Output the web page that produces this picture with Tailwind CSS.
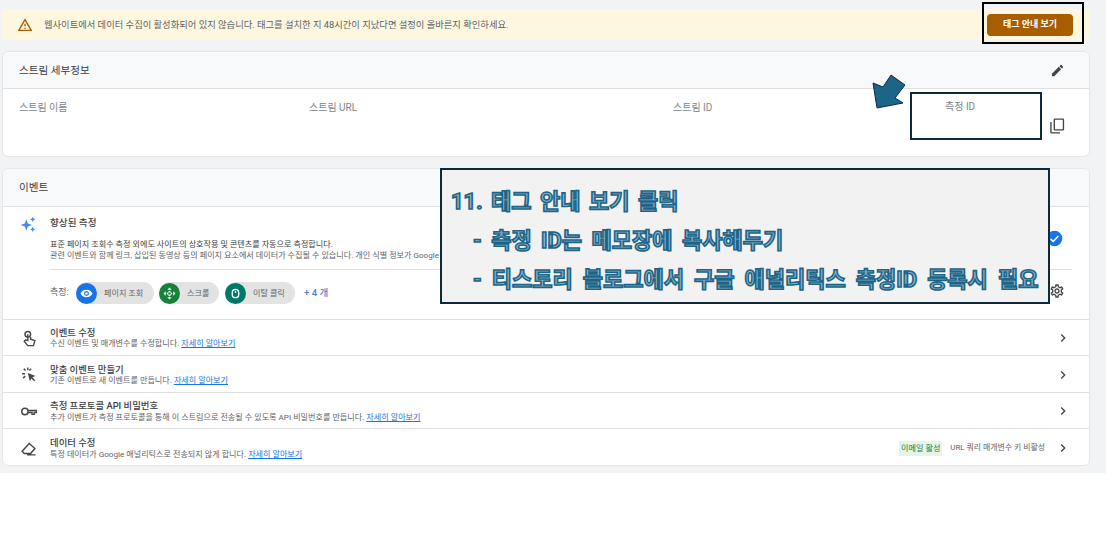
<!DOCTYPE html>
<html lang="ko">
  <head>
    <meta charset="UTF-8" />
    <title>스트림 세부정보</title>
    <script src="https://cdn.jsdelivr.net/npm/@tailwindcss/browser@4"></script>
  </head>
  <body class="bg-white font-['Roboto','Noto_Sans_CJK_KR',sans-serif]">
    <div class="relative w-[1106px] h-[545px] overflow-hidden">
      <div class="h-[473px] bg-[#f1f3f4] pt-[9px] pl-[2px] pr-[16px]">
        <!-- banner -->
        <div class="h-[31px] bg-[#fef7e0] rounded-sm flex items-center pl-[15px] pr-[17px]">
          <svg class="w-[16px] h-[16px] fill-[#a85d00]" viewBox="0 0 24 24"><path d="M12 5.990L19.530 19H4.470L12 5.990M12 2L1 21h22L12 2zm1 14h-2v2h2v-2zm0-6h-2v4h2v-4z"/></svg>
          <p class="ml-[11px] text-[9.300px] text-[#5f6368]">웹사이트에서 데이터 수집이 활성화되어 있지 않습니다. 태그를 설치한 지 48시간이 지났다면 설정이 올바른지 확인하세요.</p>
          <button class="ml-auto w-[86px] h-[22px] bg-[#a85d00] rounded-sm text-white text-[9px] font-bold">태그 안내 보기</button>
        </div>

        <!-- stream details -->
        <section class="mt-[11px] h-[106px] bg-white rounded-md border border-[#e4e6e8]">
          <div class="h-[37px] pt-[1px] bg-[#f8f9fa] border-b border-[#e0e0e0] rounded-t-md flex items-center justify-between pl-[16px] pr-[24px]">
            <h2 class="text-[10.600px] text-[#3c4043]">스트림 세부정보</h2>
            <svg class="w-[15px] h-[15px] fill-[#444746]" viewBox="0 0 24 24"><path d="M3 17.250V21h3.750L17.810 9.940l-3.750-3.750L3 17.250zM20.710 7.040c.39-.39.39-1.020 0-1.410l-2.340-2.340c-.39-.39-1.020-.39-1.410 0l-1.830 1.830 3.750 3.750 1.830-1.830z"/></svg>
          </div>
          <div class="relative flex pt-[11px] pl-[16px] text-[10px] text-[#80868b]">
            <span class="w-[290px]">스트림 이름</span>
            <span class="w-[364px]">스트림 URL</span>
            <span>스트림 ID</span>
            <svg class="absolute left-[1045px] top-[28px] w-[18px] h-[18px] fill-[#444746]" viewBox="0 0 24 24"><path d="M9 2h11a1.500 1.500 0 0 1 1.500 1.500v13A1.500 1.500 0 0 1 20 18H9a1.500 1.500 0 0 1-1.500-1.500v-13A1.500 1.500 0 0 1 9 2zm.3 1.800v12.400h10.400V3.800zM3 6.500h1.800v13.700H16V22H4.500A1.500 1.500 0 0 1 3 20.500z"/></svg>
          </div>
        </section>

        <!-- events -->
        <section class="mt-[11px] h-[298px] bg-white rounded-md border border-[#e4e6e8]">
          <div class="h-[38px] pt-[1px] bg-[#f8f9fa] border-b border-[#e0e0e0] rounded-t-md flex items-center pl-[16px]">
            <h2 class="text-[10.600px] text-[#3c4043]">이벤트</h2>
          </div>

          <div class="relative h-[113px] border-b border-[#e0e0e0] flex pl-[17px] pr-[17px]">
            <svg class="mt-[9px] w-[16px] h-[16px] fill-[#4285f4]" viewBox="0 0 24 24"><path d="M9.500 5l2.200 6.300 6.300 2.200-6.300 2.200L9.500 22l-2.200-6.300L1 13.500l6.300-2.200zM19 1l1.200 2.800L23 5l-2.800 1.200L19 9l-1.200-2.800L15 5l2.800-1.200zM19 16l1.200 2.800 2.800 1.200-2.800 1.200L19 24l-1.200-2.800L15 20l2.800-1.200z"/></svg>
            <div class="ml-[14px] flex-1">
              <h3 class="mt-[9px] text-[9.600px] leading-[14px] font-medium text-[#3c4043]">향상된 측정</h3>
              <p class="mt-[9px] text-[8.100px] leading-[11px] text-[#3c4043] whitespace-nowrap">표준 페이지 조회수 측정 외에도 사이트의 상호작용 및 콘텐츠를 자동으로 측정합니다.</p>
              <p class="text-[8.100px] leading-[11px] text-[#5f6368] whitespace-nowrap">관련 이벤트와 함께 링크, 삽입된 동영상 등의 페이지 요소에서 데이터가 수집될 수 있습니다. 개인 식별 정보가 Google</p>
              <div class="mt-[8px] pt-[12px] border-t border-[#e0e0e0] flex items-center">
                <span class="text-[9px] text-[#5f6368] w-[26px]">측정:</span>
                <div class="flex items-center h-[22px] w-[78px] bg-[#e3e3e3] rounded-full">
                  <span class="w-[21px] h-[21px] rounded-full bg-[#1a73e8] flex items-center justify-center">
                    <svg class="w-[13px] h-[13px] fill-white" viewBox="0 0 24 24"><path d="M12 5C7 5 2.700 8.100 1 12c1.700 3.900 6 7 11 7s9.300-3.100 11-7c-1.700-3.900-6-7-11-7zm0 11.500a4.500 4.500 0 1 1 0-9 4.500 4.500 0 0 1 0 9zm0-7a2.500 2.500 0 1 0 0 5 2.500 2.500 0 0 0 0-5z"/></svg>
                  </span>
                  <span class="ml-[7px] text-[8.100px] text-[#5f6368]">페이지 조회</span>
                </div>
                <div class="ml-[5px] flex items-center h-[22px] w-[60px] bg-[#e3e3e3] rounded-full">
                  <span class="w-[21px] h-[21px] rounded-full bg-[#188038] flex items-center justify-center">
                    <svg class="w-[13px] h-[13px] fill-white" viewBox="0 0 24 24"><path d="M12 1l4 4H8zM12 23l-4-4h8zM1 12l4-4v8zM23 12l-4 4V8zM12 6.500l5.500 5.500-5.500 5.500L6.500 12zm0 3a2.500 2.500 0 1 0 0 5 2.500 2.500 0 0 0 0-5z"/></svg>
                  </span>
                  <span class="ml-[7px] text-[8.100px] text-[#5f6368]">스크롤</span>
                </div>
                <div class="ml-[6px] flex items-center h-[22px] w-[70px] bg-[#e3e3e3] rounded-full">
                  <span class="w-[21px] h-[21px] rounded-full bg-[#00796b] flex items-center justify-center">
                    <svg class="w-[11px] h-[11px] fill-none stroke-white stroke-[3]" viewBox="0 0 24 24"><rect x="5" y="3" width="14" height="18" rx="7"/><path d="M12 6v5"/></svg>
                  </span>
                  <span class="ml-[7px] text-[8.100px] text-[#5f6368]">이탈 클릭</span>
                </div>
                <span class="ml-[9px] text-[9.500px] font-medium text-[#4f7fd0]">+ 4 개</span>
              </div>
            </div>
            <svg class="absolute left-[1043px] top-[23px] w-[17px] h-[17px]" viewBox="0 0 24 24"><circle cx="12" cy="12" r="11" fill="#1a73e8"/><path d="M6.500 12.500l3.700 3.700 7.300-7.700" fill="none" stroke="#fff" stroke-width="2.200"/></svg>
            <svg class="absolute left-[1046px] top-[76px] w-[16px] h-[16px] fill-[#444746]" viewBox="0 0 24 24"><path d="M19.430 12.980c.04-.32.07-.64.07-.98 0-.34-.03-.66-.07-.98l2.110-1.650c.19-.15.24-.42.12-.64l-2-3.460c-.09-.16-.26-.25-.44-.25-.06 0-.12.01-.17.03l-2.490 1c-.52-.4-1.080-.73-1.690-.98l-.38-2.650C14.460 2.180 14.250 2 14 2h-4c-.25 0-.46.18-.49.42l-.38 2.650c-.61.25-1.170.59-1.690.98l-2.490-1c-.06-.02-.12-.03-.18-.03-.17 0-.34.09-.43.25l-2 3.460c-.13.22-.07.49.12.64l2.110 1.650c-.04.32-.07.65-.07.98 0 .33.03.66.07.98l-2.110 1.650c-.19.15-.24.42-.12.64l2 3.460c.09.16.26.25.44.25.06 0 .12-.01.17-.03l2.490-1c.52.4 1.080.73 1.690.98l.38 2.650c.03.24.24.42.49.42h4c.25 0 .46-.18.49-.42l.38-2.650c.61-.25 1.170-.59 1.690-.98l2.490 1c.06.02.12.03.18.03.17 0 .34-.09.43-.25l2-3.460c.12-.22.07-.49-.12-.64l-2.110-1.650zm-1.980-1.710c.04.31.05.52.05.73 0 .21-.02.43-.05.73l-.14 1.130.89.7 1.080.84-.7 1.210-1.270-.51-1.040-.42-.9.68c-.43.32-.84.56-1.250.73l-1.060.43-.16 1.130-.2 1.350h-1.400l-.19-1.350-.16-1.130-1.060-.43c-.43-.18-.83-.41-1.230-.71l-.91-.7-1.060.43-1.270.51-.7-1.210 1.080-.84.89-.7-.14-1.130c-.03-.31-.05-.54-.05-.74s.02-.43.05-.73l.14-1.130-.89-.7-1.080-.84.7-1.210 1.270.51 1.040.42.9-.68c.43-.32.84-.56 1.250-.73l1.060-.43.16-1.130.2-1.350h1.390l.19 1.350.16 1.130 1.060.43c.43.18.83.41 1.230.71l.91.7 1.060-.43 1.270-.51.7 1.210-1.070.85-.89.7.14 1.130zM12 8c-2.210 0-4 1.790-4 4s1.790 4 4 4 4-1.790 4-4-1.790-4-4-4zm0 6c-1.100 0-2-.9-2-2s.9-2 2-2 2 .9 2 2-.9 2-2 2z"/></svg>
          </div>

          <div class="h-[36px] pt-[1px] border-b border-[#e0e0e0] flex items-center pl-[17px] pr-[18px]">
            <svg class="w-[17px] h-[17px] fill-none stroke-[#444746] stroke-2" viewBox="0 0 24 24"><circle cx="11" cy="6" r="4"/><path d="M11 6v9l-3-1-2 2 5 6h8l2-7-6-2v-3"/></svg>
            <div class="ml-[13px]">
              <p class="text-[9.400px] leading-[11px] font-medium text-[#3c4043]">이벤트 수정</p>
              <p class="text-[8.100px] leading-[11px] text-[#5f6368]">수신 이벤트 및 매개변수를 수정합니다. <a class="text-[#1a73e8] underline">자세히 알아보기</a></p>
            </div>
            <svg class="ml-auto w-[16px] h-[16px] fill-[#444746]" viewBox="0 0 24 24"><path d="M8.590 16.590L13.170 12 8.590 7.410 10 6l6 6-6 6z"/></svg>
          </div>
          <div class="h-[37px] pt-[1px] border-b border-[#e0e0e0] flex items-center pl-[17px] pr-[18px]">
            <svg class="w-[17px] h-[17px] fill-[#444746]" viewBox="0 0 24 24"><path d="M11 10l11 4-4.500 2 4 4-1.500 1.500-4-4L14 22zM10 2h2v4h-2zM3 10h4v2H3zM4.500 4.500L6 3l2.500 2.500L7 7zM3.500 16.500L6.500 13.500 8 15l-3 3zM15 3l1.500 1.500L14 7l-1.500-1.500z"/></svg>
            <div class="ml-[13px]">
              <p class="text-[9.400px] leading-[11px] font-medium text-[#3c4043]">맞춤 이벤트 만들기</p>
              <p class="text-[8.100px] leading-[11px] text-[#5f6368]">기존 이벤트로 새 이벤트를 만듭니다. <a class="text-[#1a73e8] underline">자세히 알아보기</a></p>
            </div>
            <svg class="ml-auto w-[16px] h-[16px] fill-[#444746]" viewBox="0 0 24 24"><path d="M8.590 16.590L13.170 12 8.590 7.410 10 6l6 6-6 6z"/></svg>
          </div>
          <div class="h-[36px] pt-[1px] border-b border-[#e0e0e0] flex items-center pl-[17px] pr-[18px]">
            <svg class="w-[17px] h-[17px] fill-none stroke-[#444746] stroke-2" viewBox="0 0 24 24"><circle cx="7" cy="12" r="4.500"/><path d="M11.500 10.500H23v3h-3v2.500h-3v-2.500h-5.500"/></svg>
            <div class="ml-[13px]">
              <p class="text-[9.400px] leading-[12px] font-medium text-[#3c4043]">측정 프로토콜 API 비밀번호</p>
              <p class="text-[8.100px] leading-[11px] text-[#5f6368]">추가 이벤트가 측정 프로토콜을 통해 이 스트림으로 전송될 수 있도록 API 비밀번호를 만듭니다. <a class="text-[#1a73e8] underline">자세히 알아보기</a></p>
            </div>
            <svg class="ml-auto w-[16px] h-[16px] fill-[#444746]" viewBox="0 0 24 24"><path d="M8.590 16.590L13.170 12 8.590 7.410 10 6l6 6-6 6z"/></svg>
          </div>
          <div class="h-[36px] pt-[2px] flex items-center pl-[17px] pr-[18px]">
            <svg class="w-[17px] h-[17px] fill-none stroke-[#444746] stroke-2" viewBox="0 0 24 24"><path d="M3 16L13 5l8 7-6 7H6zM10 21h12"/></svg>
            <div class="ml-[13px]">
              <p class="text-[9.400px] leading-[12px] font-medium text-[#3c4043]">데이터 수정</p>
              <p class="text-[8.100px] leading-[11px] text-[#5f6368]">특정 데이터가 Google 애널리틱스로 전송되지 않게 합니다. <a class="text-[#1a73e8] underline">자세히 알아보기</a></p>
            </div>
            <span class="ml-auto h-[15px] px-[2px] bg-[#e6f4ea] text-[#188038] text-[8.100px] leading-[15px]">이메일 활성</span>
            <span class="ml-[8px] text-[7.900px] text-[#5f6368]">URL 쿼리 매개변수 키 비활성</span>
            <svg class="ml-[10px] w-[16px] h-[16px] fill-[#444746]" viewBox="0 0 24 24"><path d="M8.590 16.590L13.170 12 8.590 7.410 10 6l6 6-6 6z"/></svg>
          </div>
        </section>
      </div>

      <!-- annotations pasted over the capture -->
      <div class="absolute left-[982px] top-[2px] w-[102px] h-[42px] border-[2px] border-black"></div>
      <svg class="absolute left-[870px] top-[72px] w-[38px] h-[38px]" viewBox="870 72 38 38"><path d="M877 108L873 83l10 4 8-12 14 10-10 13 8 5z" fill="#1c6488" stroke="#0d2c3e"/></svg>
      <div class="absolute left-[910px] top-[92px] w-[132px] h-[48px] bg-white border-[2px] border-[#0e2a3a] pl-[33px] pt-[6px] text-[10px] leading-[14px] text-[#80868b]">측정 ID</div>
      <div class="absolute left-[440px] top-[168px] w-[610px] h-[136px] bg-[#f2f2f2] border-[2px] border-[#0e2a3a] pl-[9px] pt-[12px] text-[22px] leading-[39px] font-bold text-[#8fb6ca] [-webkit-text-stroke:1.600px_#1c6488] whitespace-nowrap">
        <p class="[word-spacing:3px]">11. 태그 안내 보기 클릭</p>
        <p class="pl-[22px] [word-spacing:4px]">- 측정 ID는 메모장에 복사해두기</p>
        <p class="pl-[22px] [word-spacing:4.600px]">- 티스토리 블로그에서 구글 애널리틱스 측정ID 등록시 필요</p>
      </div>
    </div>
  </body>
</html>
